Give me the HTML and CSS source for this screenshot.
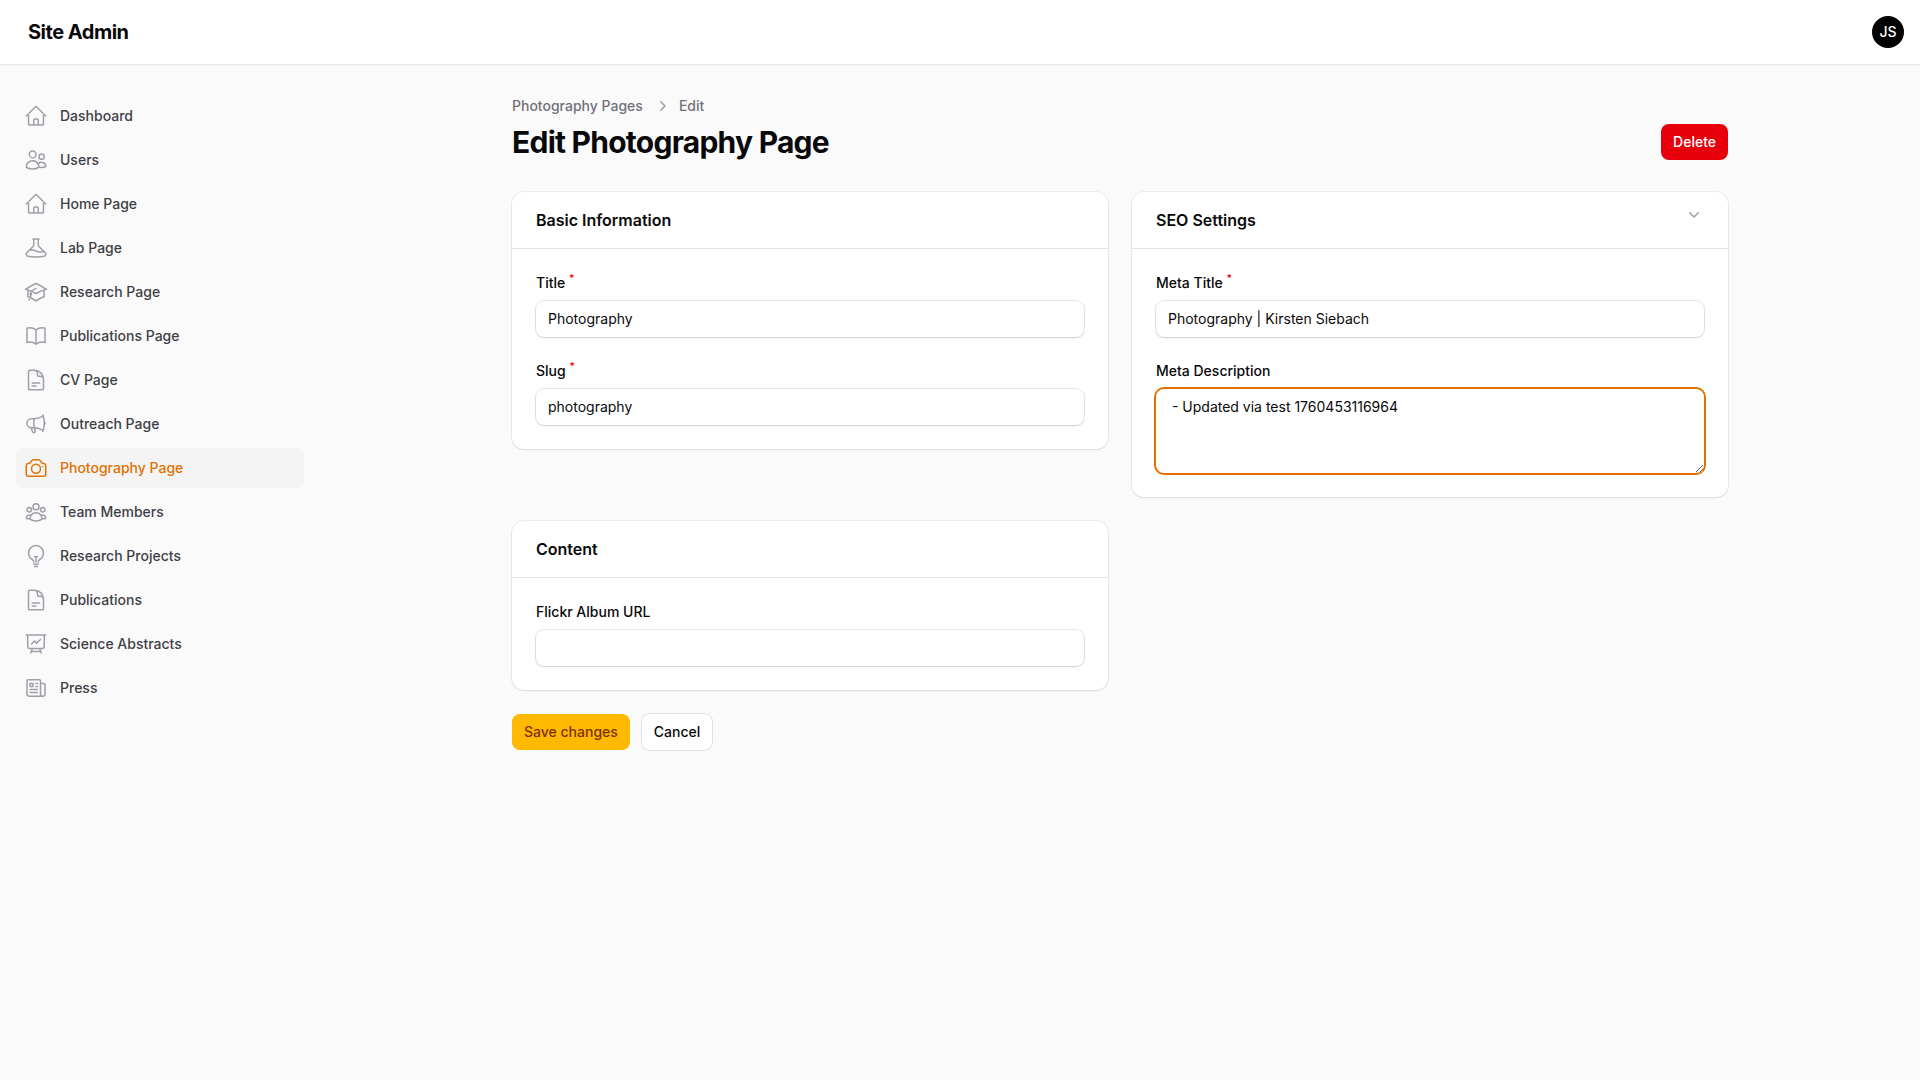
FILE: index.html
```html
<!DOCTYPE html>
<html lang="en">
  <head>
    <meta charset="UTF-8" />
    <meta name="viewport" content="width=device-width, initial-scale=1.0" />
    <title>Edit Photography Page</title>
    <link rel="stylesheet" href="styles.css">
  </head>
  <body>
    <!-- icon sprite -->
    <svg class="sprite" xmlns="http://www.w3.org/2000/svg">
      <symbol id="i-home" viewBox="0 0 24 24"><path d="m2.25 12 8.954-8.955c.44-.439 1.152-.439 1.591 0L21.75 12M4.5 9.75v10.125c0 .621.504 1.125 1.125 1.125H9.75v-4.875c0-.621.504-1.125 1.125-1.125h2.25c.621 0 1.125.504 1.125 1.125V21h4.125c.621 0 1.125-.504 1.125-1.125V9.75M8.25 21h8.25"/></symbol>
      <symbol id="i-users" viewBox="0 0 24 24"><path d="M15 19.128a9.38 9.38 0 0 0 2.625.372 9.337 9.337 0 0 0 4.121-.952 4.125 4.125 0 0 0-7.533-2.493M15 19.128v-.003c0-1.113-.285-2.16-.786-3.07M15 19.128v.106A12.318 12.318 0 0 1 8.624 21c-2.331 0-4.512-.645-6.374-1.766l-.001-.109a6.375 6.375 0 0 1 11.964-3.07M12 6.375a3.375 3.375 0 1 1-6.75 0 3.375 3.375 0 0 1 6.75 0Zm8.25 2.25a2.625 2.625 0 1 1-5.25 0 2.625 2.625 0 0 1 5.25 0Z"/></symbol>
      <symbol id="i-beaker" viewBox="0 0 24 24"><path d="M9.75 3.104v5.714a2.25 2.25 0 0 1-.659 1.591L5 14.5M9.75 3.104c-.251.023-.501.05-.75.082m.75-.082a24.301 24.301 0 0 1 4.5 0m0 0v5.714c0 .597.237 1.17.659 1.591L19.8 15.3M14.25 3.104c.251.023.501.05.75.082M19.8 15.3l-1.57.393A9.065 9.065 0 0 1 12 15a9.065 9.065 0 0 0-6.23-.693L5 14.5m14.8.8 1.402 1.402c1.232 1.232.65 3.318-1.067 3.611A48.309 48.309 0 0 1 12 21c-2.773 0-5.491-.235-8.135-.687-1.718-.293-2.3-2.379-1.067-3.61L5 14.5"/></symbol>
      <symbol id="i-cap" viewBox="0 0 24 24"><path d="M4.26 10.147a60.438 60.438 0 0 0-.491 6.347A48.62 48.62 0 0 1 12 20.904a48.62 48.62 0 0 1 8.232-4.41 60.46 60.46 0 0 0-.491-6.347m-15.482 0a50.636 50.636 0 0 0-2.658-.813A59.906 59.906 0 0 1 12 3.493a59.903 59.903 0 0 1 10.399 5.84c-.896.248-1.783.52-2.658.814m-15.482 0A50.717 50.717 0 0 1 12 13.489a50.702 50.702 0 0 1 7.74-3.342M6.75 15a.75.75 0 1 0 0-1.5.75.75 0 0 0 0 1.5Zm0 0v-3.675A55.378 55.378 0 0 1 12 8.443m-7.007 11.55A5.981 5.981 0 0 0 6.75 15.75v-1.5"/></symbol>
      <symbol id="i-book" viewBox="0 0 24 24"><path d="M12 6.042A8.967 8.967 0 0 0 6 3.75c-1.052 0-2.062.18-3 .512v14.25A8.987 8.987 0 0 1 6 18c2.305 0 4.408.867 6 2.292m0-14.25a8.966 8.966 0 0 1 6-2.292c1.052 0 2.062.18 3 .512v14.25A8.987 8.987 0 0 0 18 18a8.967 8.967 0 0 0-6 2.292m0-14.25v14.25"/></symbol>
      <symbol id="i-doc" viewBox="0 0 24 24"><path d="M19.5 14.25v-2.625a3.375 3.375 0 0 0-3.375-3.375h-1.5A1.125 1.125 0 0 1 13.5 7.125v-1.5a3.375 3.375 0 0 0-3.375-3.375H8.25m0 12.75h7.5m-7.5 3H12M10.5 2.25H5.625c-.621 0-1.125.504-1.125 1.125v17.25c0 .621.504 1.125 1.125 1.125h12.75c.621 0 1.125-.504 1.125-1.125V11.25a9 9 0 0 0-9-9Z"/></symbol>
      <symbol id="i-megaphone" viewBox="0 0 24 24"><path d="M10.34 15.84c-.688-.06-1.386-.09-2.09-.09H7.5a4.5 4.5 0 1 1 0-9h.75c.704 0 1.402-.03 2.09-.09m0 9.18c.253.962.584 1.892.985 2.783.247.55.06 1.21-.463 1.511l-.657.38c-.551.318-1.26.117-1.527-.461a20.845 20.845 0 0 1-1.44-4.282m3.102.069a18.03 18.03 0 0 1-.59-4.59c0-1.586.205-3.124.59-4.59m0 9.18a23.848 23.848 0 0 1 8.835 2.535M10.34 6.66a23.847 23.847 0 0 0 8.835-2.535m0 0A23.74 23.74 0 0 0 18.795 3m.38 1.125a23.91 23.91 0 0 1 1.014 5.395m-1.014 8.855c-.118.38-.245.754-.38 1.125m.38-1.125a23.91 23.91 0 0 0 1.014-5.395m0-3.46c.495.413.811 1.035.811 1.73 0 .695-.316 1.317-.811 1.73m0-3.46a24.347 24.347 0 0 1 0 3.46"/></symbol>
      <symbol id="i-camera" viewBox="0 0 24 24"><path d="M6.827 6.175A2.31 2.31 0 0 1 5.186 7.23c-.38.054-.757.112-1.134.175C2.999 7.58 2.25 8.507 2.25 9.574V18a2.25 2.25 0 0 0 2.25 2.25h15A2.25 2.25 0 0 0 21.75 18V9.574c0-1.067-.75-1.994-1.802-2.169a47.865 47.865 0 0 0-1.134-.175 2.31 2.31 0 0 1-1.64-1.055l-.822-1.316a2.192 2.192 0 0 0-1.736-1.039 48.774 48.774 0 0 0-5.232 0 2.192 2.192 0 0 0-1.736 1.039l-.821 1.316Z"/><path d="M16.5 12.75a4.5 4.5 0 1 1-9 0 4.5 4.5 0 0 1 9 0ZM18.75 10.5h.008v.008h-.008V10.5Z"/></symbol>
      <symbol id="i-group" viewBox="0 0 24 24"><path d="M18 18.72a9.094 9.094 0 0 0 3.741-.479 3 3 0 0 0-4.682-2.72m.94 3.198.001.031c0 .225-.012.447-.037.666A11.944 11.944 0 0 1 12 21c-2.17 0-4.207-.576-5.963-1.584A6.062 6.062 0 0 1 6 18.719m12 0a5.971 5.971 0 0 0-.941-3.197m0 0A5.995 5.995 0 0 0 12 12.75a5.995 5.995 0 0 0-5.058 2.772m0 0a3 3 0 0 0-4.681 2.72 8.986 8.986 0 0 0 3.74.477m.94-3.197a5.971 5.971 0 0 0-.94 3.197M15 6.75a3 3 0 1 1-6 0 3 3 0 0 1 6 0Zm6 3a2.25 2.25 0 1 1-4.5 0 2.25 2.25 0 0 1 4.5 0Zm-13.5 0a2.25 2.25 0 1 1-4.5 0 2.25 2.25 0 0 1 4.5 0Z"/></symbol>
      <symbol id="i-bulb" viewBox="0 0 24 24"><path d="M12 18v-5.25m0 0a6.01 6.01 0 0 0 1.5-.189m-1.5.189a6.01 6.01 0 0 1-1.5-.189m3.75 7.478a12.06 12.06 0 0 1-4.5 0m3.75 2.383a14.406 14.406 0 0 1-3 0M14.25 18v-.192c0-.983.658-1.823 1.508-2.316a7.5 7.5 0 1 0-7.517 0c.85.493 1.509 1.333 1.509 2.316V18"/></symbol>
      <symbol id="i-chart" viewBox="0 0 24 24"><path d="M3.75 3v11.25A2.25 2.25 0 0 0 6 16.5h2.25M3.75 3h-1.5m1.5 0h16.5m0 0h1.5m-1.5 0v11.25A2.25 2.25 0 0 1 18 16.5h-2.25m-7.5 0h7.5m-7.5 0-1 3m8.5-3 1 3m0 0 .5 1.5m-.5-1.5h-9.5m0 0-.5 1.5m.75-9 3-3 2.148 2.148A12.061 12.061 0 0 1 16.5 7.605"/></symbol>
      <symbol id="i-news" viewBox="0 0 24 24"><path d="M12 7.5h1.5m-1.5 3h1.5m-7.5 3h7.5m-7.5 3h7.5m3-9h3.375c.621 0 1.125.504 1.125 1.125V18a2.25 2.25 0 0 1-2.25 2.25M16.5 7.5V18a2.25 2.25 0 0 0 2.25 2.25M16.5 7.5V4.875c0-.621-.504-1.125-1.125-1.125H4.125C3.504 3.75 3 4.254 3 4.875V18a2.25 2.25 0 0 0 2.25 2.25h13.5M6 7.5h3v3H6v-3Z"/></symbol>
    </svg>

    <header class="topbar">
      <span class="brand">Site Admin</span>
      <span class="avatar">JS</span>
    </header>

    <div class="layout">
      <nav class="sidebar">
        <a class="nav-item" href="#"><svg class="nav-icon"><use href="#i-home"/></svg>Dashboard</a>
        <a class="nav-item" href="#"><svg class="nav-icon"><use href="#i-users"/></svg>Users</a>
        <a class="nav-item" href="#"><svg class="nav-icon"><use href="#i-home"/></svg>Home Page</a>
        <a class="nav-item" href="#"><svg class="nav-icon"><use href="#i-beaker"/></svg>Lab Page</a>
        <a class="nav-item" href="#"><svg class="nav-icon"><use href="#i-cap"/></svg>Research Page</a>
        <a class="nav-item" href="#"><svg class="nav-icon"><use href="#i-book"/></svg>Publications Page</a>
        <a class="nav-item" href="#"><svg class="nav-icon"><use href="#i-doc"/></svg>CV Page</a>
        <a class="nav-item" href="#"><svg class="nav-icon"><use href="#i-megaphone"/></svg>Outreach Page</a>
        <a class="nav-item active" href="#"><svg class="nav-icon"><use href="#i-camera"/></svg>Photography Page</a>
        <a class="nav-item" href="#"><svg class="nav-icon"><use href="#i-group"/></svg>Team Members</a>
        <a class="nav-item" href="#"><svg class="nav-icon"><use href="#i-bulb"/></svg>Research Projects</a>
        <a class="nav-item" href="#"><svg class="nav-icon"><use href="#i-doc"/></svg>Publications</a>
        <a class="nav-item" href="#"><svg class="nav-icon"><use href="#i-chart"/></svg>Science Abstracts</a>
        <a class="nav-item" href="#"><svg class="nav-icon"><use href="#i-news"/></svg>Press</a>
      </nav>

      <main class="main">
        <div class="breadcrumbs">
          <a href="#">Photography Pages</a>
          <svg class="crumb-sep" viewBox="0 0 20 20"><path d="M9.75 5.75l4.25 4.25-4.25 4.25"/></svg>
          <a href="#">Edit</a>
        </div>

        <div class="page-head">
          <h1>Edit Photography Page</h1>
          <button class="btn btn-danger" type="button">Delete</button>
        </div>

        <form class="form-grid">
          <section class="card">
            <div class="card-head"><h2>Basic Information</h2></div>
            <div class="card-body">
              <div class="field">
                <label for="title">Title <sup>*</sup></label>
                <input id="title" type="text" value="Photography" />
              </div>
              <div class="field">
                <label for="slug">Slug <sup>*</sup></label>
                <input id="slug" type="text" value="photography" />
              </div>
            </div>
          </section>

          <section class="card">
            <div class="card-head">
              <h2>SEO Settings</h2>
              <svg class="collapse" viewBox="0 0 20 20"><path d="M5.75 7.75l4.25 4.25 4.25-4.25"/></svg>
            </div>
            <div class="card-body">
              <div class="field">
                <label for="metaTitle">Meta Title <sup>*</sup></label>
                <input id="metaTitle" type="text" value="Photography | Kirsten Siebach" />
              </div>
              <div class="field">
                <label for="metaDesc">Meta Description</label>
                <textarea id="metaDesc" class="focused" rows="3"> - Updated via test 1760453116964</textarea>
              </div>
            </div>
          </section>

          <section class="card">
            <div class="card-head"><h2>Content</h2></div>
            <div class="card-body">
              <div class="field">
                <label for="flickr">Flickr Album URL</label>
                <input id="flickr" type="text" />
              </div>
            </div>
          </section>
        </form>

        <div class="actions">
          <button class="btn btn-primary" type="button">Save changes</button>
          <button class="btn btn-plain" type="button">Cancel</button>
        </div>
      </main>
    </div>
  </body>
</html>
```

FILE: styles.css
```css
* {
  box-sizing: border-box;
}
html,
body {
  margin: 0;
  padding: 0;
  background-color: #fafafa;
}
body {
  font-family: Inter, "Liberation Sans", sans-serif;
  font-size: 14px;
  line-height: 20px;
  color: #09090b;
  min-height: 100vh;
}
a {
  color: inherit;
  text-decoration: none;
}
.sprite {
  display: none;
}

/* top bar */
.topbar {
  height: 64px;
  background-color: #fff;
  box-shadow: 0 1px 2px rgba(0, 0, 0, 0.1);
  display: flex;
  align-items: center;
  justify-content: space-between;
  padding: 0 16px 0 28px;
  position: relative;
}
.brand {
  font-size: 20px;
  font-weight: 700;
  line-height: 28px;
  letter-spacing: -0.5px;
}
.avatar {
  width: 32px;
  height: 32px;
  border-radius: 50%;
  background-color: #000;
  color: #fff;
  font-weight: 450;
  display: flex;
  align-items: center;
  justify-content: center;
}

/* sidebar */
.layout {
  display: flex;
  align-items: flex-start;
}
.sidebar {
  width: 320px;
  flex-shrink: 0;
  padding: 32px 16px;
  display: flex;
  flex-direction: column;
  gap: 4px;
}
.nav-item {
  height: 40px;
  display: flex;
  align-items: center;
  gap: 12px;
  padding: 0 8px;
  border-radius: 8px;
  font-weight: 450;
  color: #3f3f46;
}
.nav-icon {
  width: 24px;
  height: 24px;
  flex-shrink: 0;
  fill: none;
  stroke: #9f9fa9;
  stroke-width: 1.5;
  stroke-linecap: round;
  stroke-linejoin: round;
}
.nav-item.active {
  background-color: #f4f4f5;
  color: #e17100;
}
.nav-item.active .nav-icon {
  stroke: #e17100;
}

/* main column */
.main {
  flex: 1;
  max-width: 1280px;
  margin: 0 auto;
  padding: 32px;
}
.breadcrumbs {
  display: flex;
  align-items: center;
  gap: 8px;
  font-weight: 450;
  color: #71717b;
  margin-bottom: 8px;
}
.crumb-sep {
  width: 20px;
  height: 20px;
  fill: none;
  stroke: #9f9fa9;
  stroke-width: 1.5;
  stroke-linecap: round;
  stroke-linejoin: round;
}
.page-head {
  display: flex;
  align-items: center;
  justify-content: space-between;
  margin-bottom: 32px;
}
h1 {
  margin: 0;
  font-size: 30px;
  line-height: 36px;
  font-weight: 700;
  letter-spacing: -0.75px;
}

/* cards */
.form-grid {
  display: grid;
  grid-template-columns: 1fr 1fr;
  gap: 24px;
  align-items: start;
}
.card {
  background-color: #fff;
  border-radius: 12px;
  box-shadow: 0 0 0 1px rgba(9, 9, 11, 0.05), 0 1px 2px rgba(0, 0, 0, 0.08);
}
.card-head {
  height: 57px;
  padding: 16px 24px;
  border-bottom: 1px solid #e4e4e7;
  display: flex;
  justify-content: space-between;
}
h2 {
  margin: 0;
  font-size: 16px;
  line-height: 24px;
  font-weight: 600;
}
.collapse {
  width: 20px;
  height: 20px;
  margin-top: -3px;
  fill: none;
  stroke: #9f9fa9;
  stroke-width: 1.5;
  stroke-linecap: round;
  stroke-linejoin: round;
}
.card-body {
  padding: 24px;
  display: flex;
  flex-direction: column;
  gap: 24px;
}
.field {
  display: flex;
  flex-direction: column;
  gap: 8px;
}
label {
  font-weight: 450;
}
label sup {
  color: #e7000b;
  font-weight: 500;
  font-size: 10.5px;
  line-height: 0;
}
input,
textarea {
  display: block;
  width: 100%;
  border: 0;
  outline: 0;
  margin: 0;
  padding: 6px 12px;
  font-family: inherit;
  font-size: 14px;
  line-height: 24px;
  color: #09090b;
  background-color: #fff;
  border-radius: 8px;
  box-shadow: 0 0 0 1px rgba(9, 9, 11, 0.1), 0 1px 2px rgba(0, 0, 0, 0.1);
}
input {
  height: 36px;
  padding-top: 5px;
  padding-bottom: 7px;
}
textarea {
  height: 84px;
  resize: vertical;
}
textarea.focused {
  box-shadow: 0 0 0 2px #e17100;
}

/* buttons */
.actions {
  display: flex;
  gap: 12px;
  margin-top: 24px;
}
.btn {
  height: 36px;
  padding: 0 12px;
  border: 0;
  border-radius: 8px;
  font-family: inherit;
  font-size: 14px;
  font-weight: 450;
  line-height: 20px;
  cursor: pointer;
}
.btn-danger {
  background-color: #e7000b;
  color: #fff;
}
.btn-primary {
  background-color: #ffb900;
  color: #7b3306;
}
.btn-plain {
  background-color: #fff;
  color: #09090b;
  box-shadow: 0 0 0 1px rgba(9, 9, 11, 0.1);
}
```
